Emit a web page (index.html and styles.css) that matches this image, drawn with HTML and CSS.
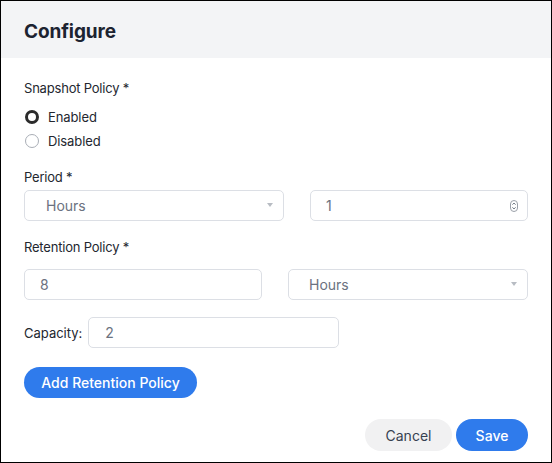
FILE: index.html
```html
<!DOCTYPE html>
<html>
<head>
<meta charset="utf-8">
<link rel="stylesheet" href="styles.css">
</head>
<body>
<div class="dialog">
  <div class="header"><h1 class="title">Configure</h1></div>
  <div class="content">
    <div class="label label-snap">Snapshot Policy *</div>
    <div class="radios">
      <div class="radio-row"><span class="radio radio-on"></span><span class="radio-text">Enabled</span></div>
      <div class="radio-row"><span class="radio"></span><span class="radio-text">Disabled</span></div>
    </div>
    <div class="label label-period">Period *</div>
    <div class="row row-period">
      <div class="field select w-260"><span class="val val-select">Hours</span>
        <svg class="caret" width="6" height="4" viewBox="0 0 6 4"><path d="M0 0H6L3 4Z" fill="#b8bcc3"/></svg>
      </div>
      <div class="field w-218"><span class="val">1</span>
        <svg class="spin" width="8" height="12" viewBox="0 0 8 12"><rect x="0.5" y="0.5" width="7" height="11" rx="3.5" fill="#fff" stroke="#9aa0a8"/><path d="M2.5 4.6L4 3.1L5.5 4.6M2.5 7.4L4 8.9L5.5 7.4" fill="none" stroke="#4b5563" stroke-width="0.9"/></svg>
      </div>
    </div>
    <div class="label label-ret">Retention Policy *</div>
    <div class="row row-ret">
      <div class="field w-238"><span class="val">8</span></div>
      <div class="field select w-240"><span class="val val-select2">Hours</span>
        <svg class="caret" width="6" height="4" viewBox="0 0 6 4"><path d="M0 0H6L3 4Z" fill="#b8bcc3"/></svg>
      </div>
    </div>
    <div class="row row-cap">
      <span class="cap-label">Capacity:</span>
      <div class="field w-251"><span class="val val-cap">2</span></div>
    </div>
    <button class="btn btn-add">Add Retention Policy</button>
    <div class="footer">
      <button class="btn btn-cancel">Cancel</button>
      <button class="btn btn-save">Save</button>
    </div>
  </div>
</div>
</body>
</html>
```
FILE: styles.css
```css
* { box-sizing: border-box; }
html, body { margin: 0; padding: 0; background: #fff; }
body { font-family: Inter, "Noto Sans", sans-serif; color: #1f2430; }
.dialog {
  width: 552px; height: 463px;
  border: 1px solid #000;
  display: flex; flex-direction: column;
  background: #fff;
}
.header {
  height: 57px; background: #f3f4f6;
  display: flex; align-items: center;
  padding: 0 23px;
}
.title { margin: 0; font-size: 19px; font-weight: 700; color: #1c2331; letter-spacing: -0.1px; padding-top: 4px; }
.content { padding: 0 23px; display: flex; flex-direction: column; }
.label { font-size: 13px; line-height: 16px; color: #23272f; letter-spacing: -0.2px; }
.label-snap { margin-top: 22px; }
.radios { margin-top: 9px; display: flex; flex-direction: column; }
.radio-row { height: 24px; display: flex; align-items: center; }
.radio {
  width: 14px; height: 14px; border-radius: 50%;
  border: 1px solid #a9aeb6; margin-left: 1px; background: #fff;
}
.radio-on { border: 3px solid #2b2b2b; }
.radio-text { margin-left: 9px; font-size: 13px; color: #23272f; letter-spacing: -0.1px; }
.label-period { margin-top: 16px; }
.row { display: flex; align-items: center; gap: 26px; }
.row-period { margin-top: 5px; }
.label-ret { margin-top: 18px; }
.row-ret { margin-top: 14px; }
.row-cap { margin-top: 17px; gap: 6px; }
.field {
  height: 31px; border: 1px solid #dcdfe5; border-radius: 5px;
  display: flex; align-items: center; justify-content: space-between;
  padding: 0 10px 0 15px; background: #fff;
}
.val { font-size: 14px; color: #6b7280; }
.val-select { margin-left: 6px; }
.val-select2 { margin-left: 5px; }
.val-cap { margin-left: 1px; }
.w-260 { width: 260px; }
.w-218 { width: 218px; }
.w-238 { width: 238px; }
.w-240 { width: 240px; }
.w-251 { width: 251px; }
.caret { margin-top: -2px; }
.spin { margin-right: -1px; }
.cap-label { font-size: 13px; color: #23272f; }
.btn {
  font-family: Inter, "Noto Sans", sans-serif;
  border: none; border-radius: 16px; font-size: 14px; cursor: pointer;
}
.btn-add {
  margin-top: 19px; align-self: flex-start;
  width: 173px; height: 31px; background: #2f7bec; color: #fff; font-weight: 500;
}
.footer { margin-top: 21px; display: flex; justify-content: flex-end; gap: 4px; }
.btn-cancel { width: 87px; height: 32px; background: #f1f1f2; color: #374151; }
.btn-save { width: 72px; height: 32px; background: #2f7bec; color: #fff; font-weight: 500; }
```
